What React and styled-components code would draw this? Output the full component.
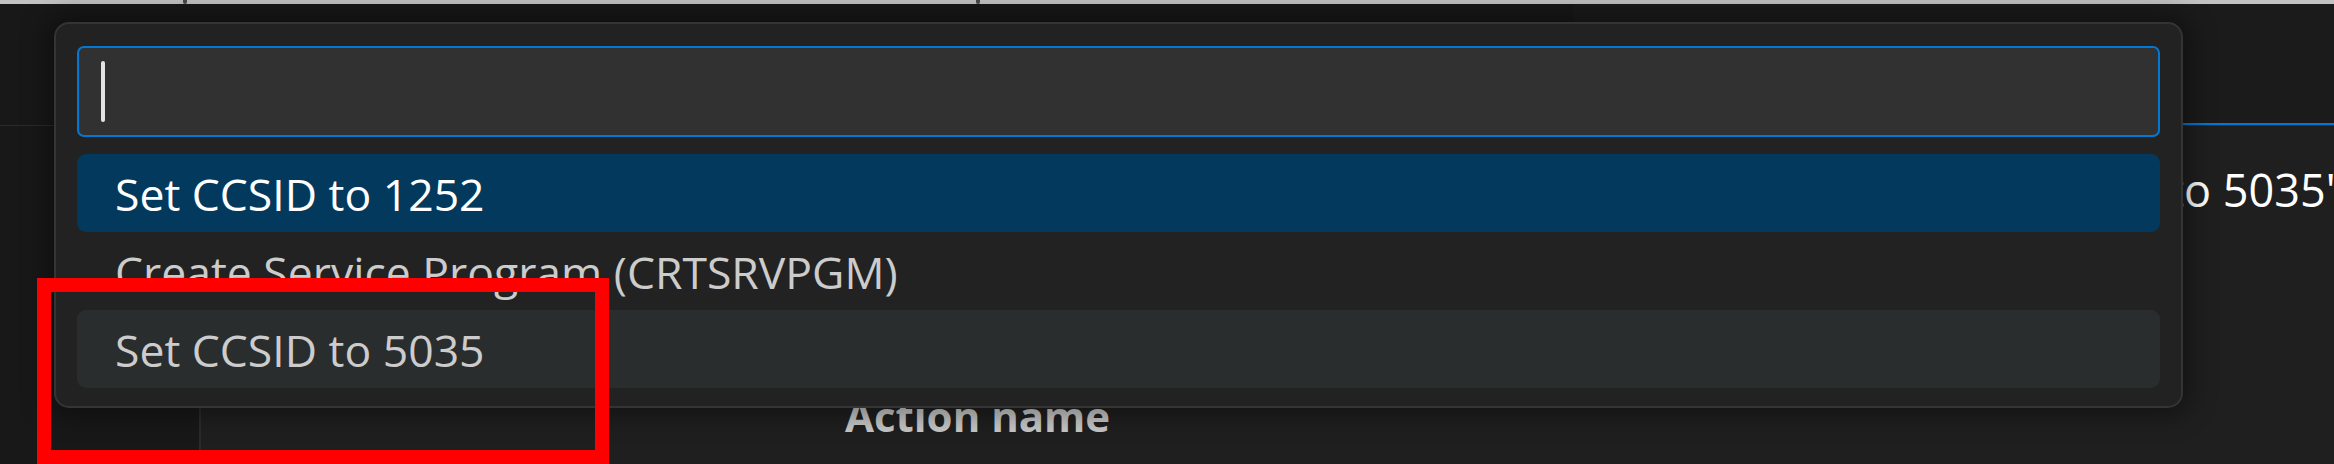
import React from 'react'
import styled, { createGlobalStyle } from 'styled-components'

const GlobalStyle = createGlobalStyle`
  html, body {
    margin: 0;
    padding: 0;
    background: #1f1f1f;
  }
  * {
    box-sizing: border-box;
  }
`

const Frame = styled.div`
  position: relative;
  width: 2334px;
  height: 464px;
  overflow: hidden;
  display: flex;
  flex-direction: column;
  background: #1f1f1f;
  font-family: "Open Sans", "Noto Sans", sans-serif;
`

const TopStrip = styled.div`
  height: 4px;
  flex: none;
  display: flex;
  background: #c3c3c3;
`

const Tick = styled.span`
  width: 4px;
  height: 4px;
  margin-left: ${p => p.$gap}px;
  border-radius: 0 0 2px 2px;
  background: #4a4a4a;
`

const Header = styled.div`
  height: 122px;
  flex: none;
  display: flex;
  justify-content: flex-end;
  background: #181818;
  border-bottom: 1px solid #2b2b2b;
`

const ActiveTab = styled.div`
  width: 760px;
  height: 100%;
  background: #1b1b1b;
  box-shadow: inset 0 -2px 0 #0078d4;
`

const Body = styled.div`
  flex: 1;
  display: flex;
`

const Sidebar = styled.div`
  width: 201px;
  flex: none;
  background: #181818;
  border-right: 2px solid #2b2b2b;
`

const Main = styled.div`
  flex: 1;
  display: flex;
  flex-direction: column;
  padding-top: 34px;
`

const ValueLine = styled.div`
  padding-left: 1751px;
  height: 60px;
  line-height: 60px;
  font-size: 45px;
  color: #ffffff;
  white-space: nowrap;
`

const ColumnLabel = styled.div`
  margin-top: 166px;
  padding-left: 644px;
  height: 60px;
  line-height: 60px;
  font-size: 42px;
  font-weight: 700;
  color: #c8c8c8;
  white-space: nowrap;
`

const QuickPick = styled.div`
  position: absolute;
  left: 54px;
  top: 22px;
  width: 2129px;
  display: flex;
  flex-direction: column;
  gap: 17px;
  padding: 22px 21px 18px 21px;
  background: #222222;
  border: 2px solid #343434;
  border-radius: 15px;
  box-shadow: 0 0 26px 8px rgba(0, 0, 0, 0.38);
`

const SearchBox = styled.div`
  height: 91px;
  display: flex;
  align-items: center;
  padding-left: 22px;
  background: #313131;
  border: 2px solid #0078d4;
  border-radius: 7px;
`

const Caret = styled.span`
  width: 4px;
  height: 61px;
  border-radius: 2px;
  background: #e4e4e4;
`

const List = styled.div`
  display: flex;
  flex-direction: column;
`

const Row = styled.div`
  height: 78px;
  display: flex;
  align-items: center;
  padding-left: 38px;
  border-radius: 9px;
  font-size: 44.5px;
  white-space: nowrap;
  color: ${p => (p.$selected ? '#ffffff' : '#cccccc')};
  background: ${p => (p.$selected ? '#04395e' : p.$hover ? '#2a2d2e' : 'transparent')};
`

const Highlight = styled.div`
  position: absolute;
  left: 37px;
  top: 278px;
  width: 572px;
  height: 186px;
  border: 14px solid #ff0000;
`

const items = [
  { label: 'Set CCSID to 1252', selected: true },
  { label: 'Create Service Program (CRTSRVPGM)' },
  { label: 'Set CCSID to 5035', hover: true },
]

export default function App() {
  return (
    <>
      <GlobalStyle />
      <Frame>
        <TopStrip>
          <Tick $gap={183} />
          <Tick $gap={789} />
        </TopStrip>
        <Header>
          <ActiveTab />
        </Header>
        <Body>
          <Sidebar />
          <Main>
            <ValueLine>Set CCSID to 5035"</ValueLine>
            <ColumnLabel>Action name</ColumnLabel>
          </Main>
        </Body>

        <QuickPick>
          <SearchBox>
            <Caret />
          </SearchBox>
          <List>
            {items.map(item => (
              <Row key={item.label} $selected={item.selected} $hover={item.hover}>
                {item.label}
              </Row>
            ))}
          </List>
        </QuickPick>

        <Highlight />
      </Frame>
    </>
  )
}
